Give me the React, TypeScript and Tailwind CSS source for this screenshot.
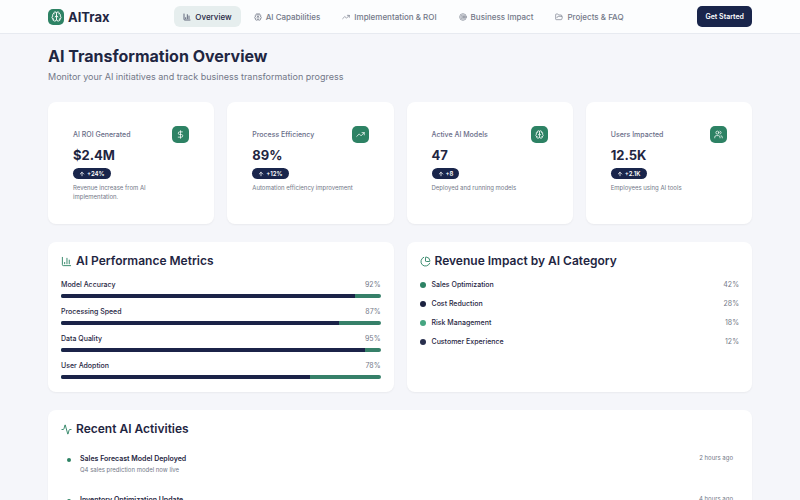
import type { ReactNode } from 'react'
import {
  Activity,
  ArrowUp,
  Brain,
  ChartColumn,
  ChartPie,
  DollarSign,
  FolderOpen,
  Target,
  TrendingUp,
  Users,
  type LucideIcon,
} from 'lucide-react'
import { clsx } from 'clsx'

const NAV: { label: string; icon: LucideIcon }[] = [
  { label: 'Overview', icon: ChartColumn },
  { label: 'AI Capabilities', icon: Brain },
  { label: 'Implementation & ROI', icon: TrendingUp },
  { label: 'Business Impact', icon: Target },
  { label: 'Projects & FAQ', icon: FolderOpen },
]

const STATS: { label: string; value: string; change: string; note: string; icon: LucideIcon }[] = [
  {
    label: 'AI ROI Generated',
    value: '$2.4M',
    change: '+24%',
    note: 'Revenue increase from AI implementation.',
    icon: DollarSign,
  },
  {
    label: 'Process Efficiency',
    value: '89%',
    change: '+12%',
    note: 'Automation efficiency improvement',
    icon: TrendingUp,
  },
  {
    label: 'Active AI Models',
    value: '47',
    change: '+8',
    note: 'Deployed and running models',
    icon: Brain,
  },
  {
    label: 'Users Impacted',
    value: '12.5K',
    change: '+2.1K',
    note: 'Employees using AI tools',
    icon: Users,
  },
]

const METRICS = [
  { label: 'Model Accuracy', value: 92 },
  { label: 'Processing Speed', value: 87 },
  { label: 'Data Quality', value: 95 },
  { label: 'User Adoption', value: 78 },
]

const CATEGORIES = [
  { label: 'Sales Optimization', value: 42, dot: 'bg-[#2d8264]' },
  { label: 'Cost Reduction', value: 28, dot: 'bg-[#1b2240]' },
  { label: 'Risk Management', value: 18, dot: 'bg-[#45a581]' },
  { label: 'Customer Experience', value: 12, dot: 'bg-[#282f4d]' },
]

const ACTIVITIES = [
  {
    title: 'Sales Forecast Model Deployed',
    detail: 'Q4 sales prediction model now live',
    time: '2 hours ago',
  },
  {
    title: 'Inventory Optimization Update',
    detail: 'Improved stock level predictions',
    time: '4 hours ago',
  },
]

function Panel({
  title,
  icon: Icon,
  children,
}: {
  title: string
  icon: LucideIcon
  children: ReactNode
}) {
  return (
    <section className="rounded-lg bg-white px-[13px] pt-[11px] pb-[13px] shadow-xs">
      <h2 className="flex items-center gap-1 text-[12px] leading-4 font-semibold text-[#1f2642]">
        <Icon className="size-[11px] text-[#2d8264]" strokeWidth={2} />
        {title}
      </h2>
      {children}
    </section>
  )
}

export default function App() {
  return (
    <div className="min-h-screen bg-[#f5f6fa] font-['Inter',sans-serif] text-[#1f2642]">
      <header className="sticky top-0 z-10 border-b border-[#e7eaf0] bg-[#fcfdfe] px-12">
        <div className="flex h-[33px] items-center justify-between">
          <a href="#" className="flex items-center gap-1">
            <span className="flex size-4 items-center justify-center rounded-[5px] bg-[#2d8264] text-white">
              <Brain className="size-[11px]" />
            </span>
            <span className="text-[13px] leading-4 font-bold">AITrax</span>
          </a>
          <nav className="flex items-center gap-1">
            {NAV.map(({ label, icon: Icon }, i) => (
              <a
                key={label}
                href="#"
                className={clsx(
                  'flex h-[21px] items-center gap-1 rounded-md px-[9px] text-[8px] font-medium',
                  i === 0 ? 'bg-[#e6eeee] text-[#1f2642]' : 'text-[#737888]',
                )}
              >
                <Icon className="size-2" />
                {label}
              </a>
            ))}
          </nav>
          <button className="h-[21px] rounded-[5px] bg-[#19254b] px-2 text-[7px] leading-3 font-semibold text-white">
            Get Started
          </button>
        </div>
      </header>

      <main className="px-12 pt-3 pb-6">
        <h1 className="text-[16px] leading-5 font-bold">AI Transformation Overview</h1>
        <p className="mt-[3px] text-[9px] leading-4 text-[#737888]">
          Monitor your AI initiatives and track business transformation progress
        </p>

        <div className="mt-[17px] grid grid-cols-4 gap-[13px]">
          {STATS.map(({ label, value, change, note, icon: Icon }) => (
            <section key={label} className="h-[122px] rounded-lg bg-white px-[25px] py-6 shadow-xs">
              <div className="flex items-center justify-between">
                <h3 className="text-[7px] leading-4 font-medium text-[#686d88]">{label}</h3>
                <span className="flex size-[17px] items-center justify-center rounded-[5px] bg-[#2d8264] text-white">
                  <Icon className="size-[9px]" />
                </span>
              </div>
              <p className="mt-1 text-[13px] leading-4 font-bold">{value}</p>
              <span className="mt-[5px] flex h-[11px] w-fit items-center gap-0.5 rounded-full bg-[#19254b] px-1.5 text-[6px] font-semibold text-white">
                <ArrowUp className="size-[6px]" strokeWidth={3} />
                {change}
              </span>
              <p className="mt-1 text-[6px] leading-[9px] text-[#737888]">{note}</p>
            </section>
          ))}
        </div>

        <div className="mt-[18px] grid grid-cols-2 gap-[13px]">
          <Panel title="AI Performance Metrics" icon={ChartColumn}>
            <div className="mt-2.5 flex flex-col gap-2">
              {METRICS.map(({ label, value }) => (
                <div key={label}>
                  <div className="flex justify-between text-[7px] leading-3">
                    <span className="font-medium">{label}</span>
                    <span className="text-[#737888]">{value}%</span>
                  </div>
                  <div className="mt-[3px] h-1 overflow-hidden rounded-full bg-[#368069]">
                    <div className="h-full bg-[#1b2348]" style={{ width: `${value}%` }} />
                  </div>
                </div>
              ))}
            </div>
          </Panel>

          <Panel title="Revenue Impact by AI Category" icon={ChartPie}>
            <ul className="mt-2.5 flex flex-col gap-[7px]">
              {CATEGORIES.map(({ label, value, dot }) => (
                <li key={label} className="flex items-center gap-1.5 text-[7px] leading-3">
                  <span className={clsx('size-1.5 rounded-full', dot)} />
                  <span className="font-medium">{label}</span>
                  <span className="ml-auto text-[#737888]">{value}%</span>
                </li>
              ))}
            </ul>
          </Panel>
        </div>

        <div className="mt-[18px]">
          <Panel title="Recent AI Activities" icon={Activity}>
            <ul className="mt-4 flex flex-col gap-[19px] px-1.5">
              {ACTIVITIES.map(({ title, detail, time }) => (
                <li key={title} className="flex items-start gap-[9px]">
                  <span className="mt-[5px] size-1 rounded-full bg-[#2d8264]" />
                  <div>
                    <p className="text-[7px] leading-3 font-semibold">{title}</p>
                    <p className="text-[6px] leading-[10px] text-[#737888]">{detail}</p>
                  </div>
                  <span className="ml-auto text-[6px] leading-[10px] text-[#737888]">{time}</span>
                </li>
              ))}
            </ul>
          </Panel>
        </div>
      </main>
    </div>
  )
}
